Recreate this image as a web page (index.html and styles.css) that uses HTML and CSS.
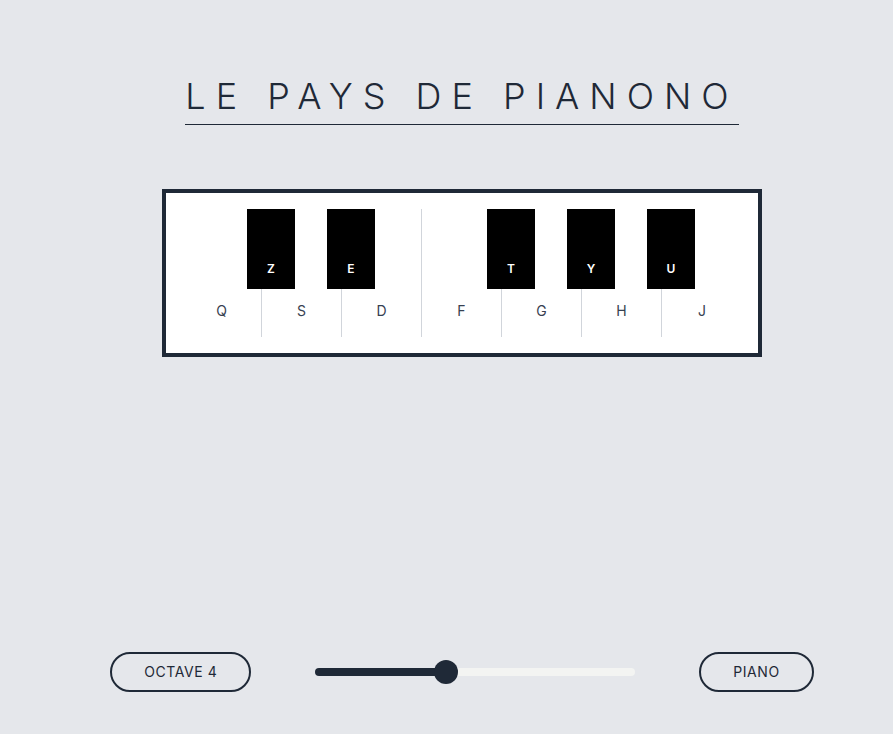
FILE: index.html
```html
<!DOCTYPE html>
<html lang="fr">
<head>
    <meta charset="UTF-8">
    <meta name="viewport" content="width=device-width, initial-scale=1.0">
    <title>Le pays de Pianono</title>
    <link rel="stylesheet" href="styles.css">
</head>
<body>
    <main>
        <h1>Le pays de Pianono</h1>

        <div class="keyboard">
            <button class="key white" data-note="C">Q</button>
            <button class="key black" data-note="C#">Z</button>
            <button class="key white" data-note="D">S</button>
            <button class="key black" data-note="D#">E</button>
            <button class="key white" data-note="E">D</button>
            <button class="key white" data-note="F">F</button>
            <button class="key black" data-note="F#">T</button>
            <button class="key white" data-note="G">G</button>
            <button class="key black" data-note="G#">Y</button>
            <button class="key white" data-note="A">H</button>
            <button class="key black" data-note="A#">U</button>
            <button class="key white" data-note="B">J</button>
        </div>
    </main>

    <div class="controls">
        <button class="pill" id="octave">Octave 4</button>
        <input type="range" id="volume" class="slider" min="0" max="100" value="40" aria-label="Volume">
        <button class="pill" id="instrument">Piano</button>
    </div>

    <script src="script.js"></script>
</body>
</html>
```
FILE: styles.css
```css
* {
    box-sizing: border-box;
}

body {
    display: flex;
    flex-direction: column;
    justify-content: space-between;
    align-items: center;
    min-height: 100vh;
    margin: 0;
    padding: 76px 0 42px 31px;
    background-color: #e5e7eb;
    color: #1f2937;
    font-family: Inter, sans-serif;
}

button {
    font-family: inherit;
    cursor: pointer;
}

main {
    display: flex;
    flex-direction: column;
    align-items: center;
    gap: 64px;
}

h1 {
    margin: 0;
    padding-bottom: 8px;
    border-bottom: 1px solid #1f2937;
    font-size: 36px;
    font-weight: 300;
    line-height: 40px;
    letter-spacing: 10px;
    text-transform: uppercase;
}

.keyboard {
    display: flex;
    align-items: flex-start;
    padding: 16px;
    border: 4px solid #1f2937;
    background-color: #fff;
}

.key {
    display: flex;
    justify-content: center;
    align-items: flex-end;
    border: none;
}

.white {
    width: 80px;
    height: 128px;
    padding: 0 0 16px;
    border-right: 1px solid #d1d5db;
    background-color: #fff;
    color: #374151;
    font-size: 14px;
    line-height: 20px;
}

.white:last-child {
    border-right: none;
}

/* the black keys sit over the joint between two white keys */
.black {
    position: relative;
    z-index: 1;
    width: 48px;
    height: 80px;
    margin: 0 -33px 0 -15px;
    padding: 0 0 12px;
    background-color: #000;
    color: #fff;
    font-size: 12px;
    font-weight: 600;
    line-height: 16px;
}

.white:active {
    background-color: #e5e7eb;
}

.black:active {
    background-color: #374151;
}

.controls {
    display: flex;
    align-items: center;
    gap: 64px;
}

.pill {
    padding: 8px 32px;
    border: 2px solid #1f2937;
    border-radius: 20px;
    background-color: transparent;
    color: #1f2937;
    font-size: 14px;
    line-height: 20px;
    letter-spacing: 0.04em;
    text-transform: uppercase;
    white-space: nowrap;
}

.pill:hover {
    background-color: #1f2937;
    color: #e5e7eb;
}

.slider {
    -webkit-appearance: none;
    appearance: none;
    width: 320px;
    height: 8px;
    margin: 0;
    border-radius: 4px;
    background: linear-gradient(to right, #1f2937 var(--fill, 40%), #f3f4f2 var(--fill, 40%));
    cursor: pointer;
}

.slider::-webkit-slider-thumb {
    -webkit-appearance: none;
    width: 24px;
    height: 24px;
    border-radius: 50%;
    background-color: #1f2937;
}

.slider::-moz-range-thumb {
    width: 24px;
    height: 24px;
    border: none;
    border-radius: 50%;
    background-color: #1f2937;
}
```
FILE: script.js
```js
const volume = document.getElementById("volume");
const octave = document.getElementById("octave");
let currentOctave = 4;

volume.addEventListener("input", () => {
    volume.style.setProperty("--fill", volume.value + "%");
});

octave.addEventListener("click", () => {
    currentOctave = currentOctave === 6 ? 2 : currentOctave + 1;
    octave.textContent = "Octave " + currentOctave;
});
```
